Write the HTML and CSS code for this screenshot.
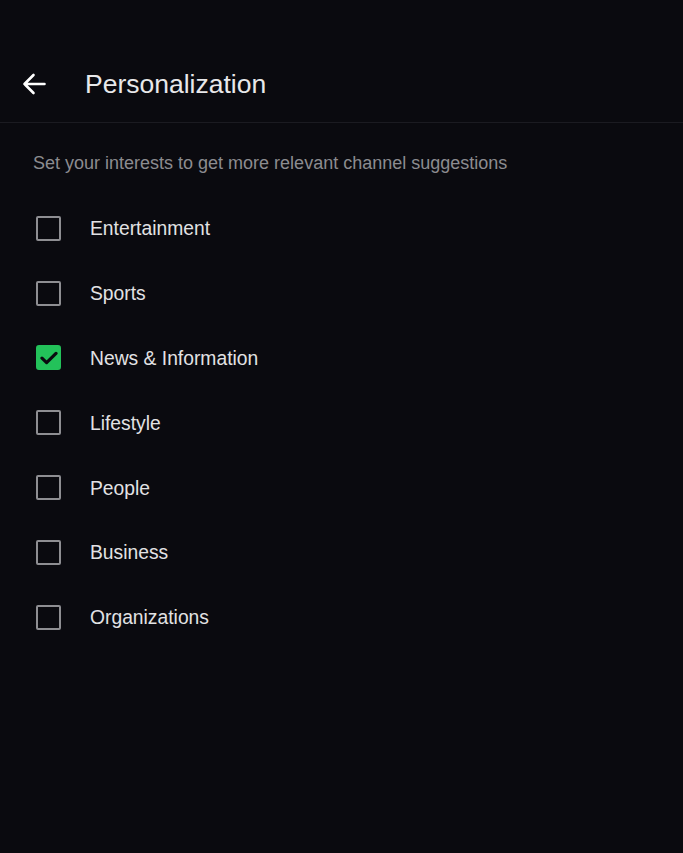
FILE: index.html
```html
<!DOCTYPE html>
<html lang="en">
<head>
    <meta charset="UTF-8">
    <meta name="viewport" content="width=device-width, initial-scale=1.0">
    <title>Personalization</title>
    <link rel="stylesheet" href="styles.css">
</head>
<body>
    <!-- Top bar -->
    <div class="header">
        <div class="header-row">
            <button class="back-button" aria-label="Back">
                <svg width="24" height="22" viewBox="0 0 24 22">
                    <path d="M22.5 11H2.5M11.5 2L2.5 11L11.5 20" fill="none" stroke="#ffffff" stroke-width="2.6" stroke-linecap="round" stroke-linejoin="round"/>
                </svg>
            </button>
            <h1>Personalization</h1>
        </div>
    </div>

    <div class="content">
        <p class="hint">Set your interests to get more relevant channel suggestions</p>

        <!-- Interest list -->
        <div class="interest-list">
            <label class="interest"><span class="box"></span><span>Entertainment</span></label>
            <label class="interest"><span class="box"></span><span>Sports</span></label>
            <label class="interest"><span class="box checked"><svg width="18" height="14" viewBox="0 0 18 14"><path d="M2 7.2L6.6 11.6L16 2.4" fill="none" stroke="#0a0a0f" stroke-width="3.2" stroke-linecap="round" stroke-linejoin="round"/></svg></span><span>News &amp; Information</span></label>
            <label class="interest"><span class="box"></span><span>Lifestyle</span></label>
            <label class="interest"><span class="box"></span><span>People</span></label>
            <label class="interest"><span class="box"></span><span>Business</span></label>
            <label class="interest"><span class="box"></span><span>Organizations</span></label>
        </div>
    </div>
</body>
</html>
```
FILE: styles.css
```css
/* Page */
body {
    margin: 0;
    background-color: #0a0a0f;
    font-family: "Liberation Sans", Arial, sans-serif;
    color: #e4e4e6;
}
/* Top bar */
.header {
    padding: 54px 22px 8px;
    border-bottom: 1px solid #1b1b21;
}
.header-row {
    display: flex;
    align-items: center;
    height: 60px;
}
.back-button {
    display: flex;
    align-items: center;
    justify-content: center;
    width: 24px;
    height: 24px;
    padding: 0;
    background: none;
    border: none;
    cursor: pointer;
}
.header h1 {
    margin: 0 0 0 39px;
    font-size: 26.5px;
    font-weight: normal;
    color: #e8e8ea;
}
/* Content */
.content {
    padding: 29px 0 0 33px;
}
.hint {
    margin: 0;
    font-size: 18px;
    line-height: 22px;
    color: #8c8c90;
}
.interest-list {
    display: flex;
    flex-direction: column;
    margin-top: 23px;
}
.interest {
    display: flex;
    align-items: center;
    gap: 29px;
    height: 64.8px;
    padding-left: 3px;
    font-size: 19.3px;
    color: #e2e2e4;
    cursor: pointer;
}
.box {
    display: flex;
    align-items: center;
    justify-content: center;
    box-sizing: border-box;
    width: 25px;
    height: 25px;
    margin-top: -2px;
    border: 2px solid #8e8e92;
    border-radius: 2px;
    flex-shrink: 0;
}
.box.checked {
    background-color: #23c25a;
    border-color: #23c25a;
    border-radius: 3px;
}
```
